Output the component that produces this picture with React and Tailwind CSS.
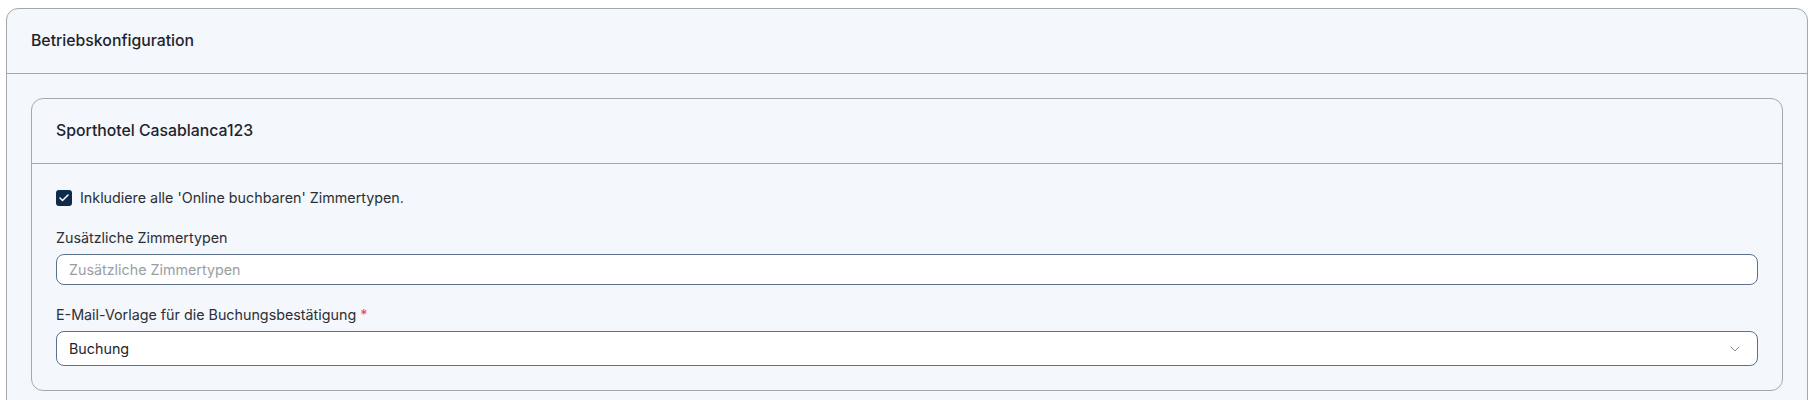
import React from "react";
import { ChevronDown, Check } from "lucide-react";

export default function App() {
    return (
        <div className="min-h-[400px] bg-white pl-[6px] pr-[8px] pt-2 font-['Inter',sans-serif] text-[#1e242c]">
            <div className="rounded-xl border border-[#a4a7ab] bg-[#f4f7fb]">
                <div className="h-[65px] px-6 flex items-center border-b border-[#a4a7ab]">
                    <h2 className="text-[15.8px] font-medium">Betriebskonfiguration</h2>
                </div>

                <div className="p-6">
                    <div className="rounded-xl border border-[#a4a7ab] bg-[#f4f7fb]">
                        <div className="h-[65px] px-6 flex items-center border-b border-[#a4a7ab]">
                            <h3 className="text-[15.8px] font-medium">Sporthotel Casablanca123</h3>
                        </div>

                        <div className="px-6 pt-6 pb-6 flex flex-col text-[14.3px]">
                            <label className="flex items-center gap-2 leading-5 text-[#2b3036]">
                                <span className="w-4 h-4 rounded-[3px] bg-[#0e2c4a] flex items-center justify-center">
                                    <Check className="w-3 h-3 text-white" strokeWidth={3} />
                                </span>
                                Inkludiere alle 'Online buchbaren' Zimmertypen.
                            </label>

                            <div className="mt-5 flex flex-col">
                                <span className="leading-5 mb-1.5 text-[#2b3036]">Zusätzliche Zimmertypen</span>
                                <input
                                    className="h-[31px] w-full rounded-lg border border-[#5d728a] bg-white px-3 outline-none placeholder:text-[#9a9ea4]"
                                    placeholder="Zusätzliche Zimmertypen"
                                />
                            </div>

                            <div className="mt-5 flex flex-col">
                                <span className="leading-5 mb-1.5 text-[#2b3036]">
                                    E-Mail-Vorlage für die Buchungsbestätigung <span className="text-[#e5484d]">*</span>
                                </span>
                                <div className="h-[35px] w-full rounded-lg border border-[#5d728a] bg-white px-3 flex items-center justify-between">
                                    <span>Buchung</span>
                                    <ChevronDown className="w-4 h-4 mr-0.5 text-[#8a8f96]" strokeWidth={1.5} />
                                </div>
                            </div>
                        </div>
                    </div>
                </div>
            </div>
        </div>
    );
}
